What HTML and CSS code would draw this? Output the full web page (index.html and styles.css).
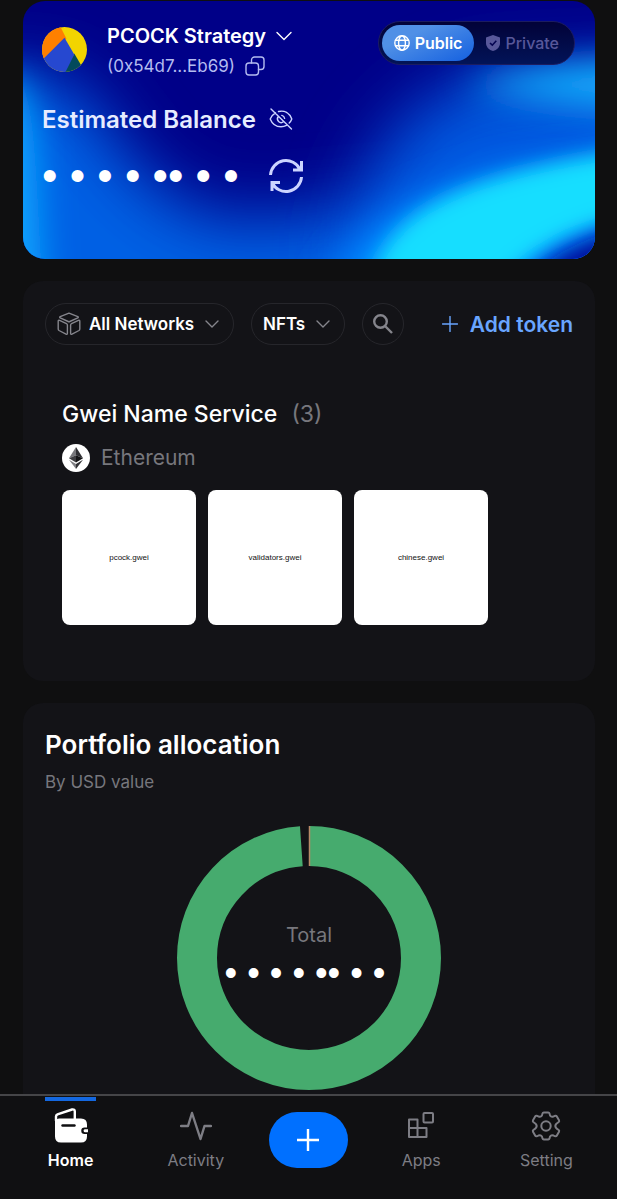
FILE: index.html
```html
<!DOCTYPE html>
<html lang="en">
<head>
    <meta charset="UTF-8">
    <meta name="viewport" content="width=device-width, initial-scale=1.0">
    <title>Wallet</title>
    <link rel="stylesheet" href="styles.css">
</head>
<body>

    <main>
        <!-- Balance card -->
        <section class="balance-card">
            <svg class="balance-bg" viewBox="0 0 573 258" preserveAspectRatio="none" aria-hidden="true">
                <defs>
                    <filter id="blurS" filterUnits="userSpaceOnUse" x="-150" y="-150" width="900" height="560"><feGaussianBlur stdDeviation="10"/></filter>
                    <filter id="blurM" filterUnits="userSpaceOnUse" x="-150" y="-150" width="900" height="560"><feGaussianBlur stdDeviation="18"/></filter>
                    <filter id="blurL" filterUnits="userSpaceOnUse" x="-150" y="-150" width="900" height="560"><feGaussianBlur stdDeviation="34"/></filter>
                </defs>
                <rect width="573" height="258" fill="#000088"/>
                <path d="M-80 76 L40 76 C90 110 100 195 210 220 L440 200 L440 360 L-80 360Z" fill="#0060e4" filter="url(#blurL)"/>
                <path d="M340 340 C310 200 350 120 450 76 L680 66 L680 340Z" fill="#0058e0" filter="url(#blurL)"/>
                <path d="M-80 76 L-4 76 C16 110 12 200 24 340 L-80 340Z" fill="#0ca8ff" filter="url(#blurM)"/>
                <path d="M440 84 C500 66 560 60 680 56 L680 108 C580 112 500 100 440 84Z" fill="#18b0ff" filter="url(#blurM)"/>
                <path d="M290 320 C330 210 390 170 680 146 L680 320Z" fill="#0088ff" filter="url(#blurM)"/>
                <path d="M340 320 C350 220 400 172 680 140 L680 202 C570 216 500 240 450 320Z" fill="#12deff" filter="url(#blurS)"/>
                <path d="M490 320 C505 258 545 236 680 208 L680 320Z" fill="#00109c" filter="url(#blurS)"/>
            </svg>

            <div class="account-row">
                <svg class="avatar" viewBox="0 0 46 46" aria-hidden="true">
                    <clipPath id="avatarClip"><circle cx="23" cy="23" r="23"/></clipPath>
                    <g clip-path="url(#avatarClip)">
                        <rect width="46" height="46" fill="#f2d400"/>
                        <path d="M0 0H19L25 12L0 35Z" fill="#ff8000"/>
                        <path d="M33 27L40 39L32 46H22Z" fill="#024a5c"/>
                        <path d="M0 34L23 11L33 28L24 46H0Z" fill="#2648d0"/>
                    </g>
                </svg>
                <div class="account">
                    <button type="button" class="account-name">PCOCK Strategy
                        <svg width="16" height="10" viewBox="0 0 16 10" class="line"><path d="M1 1.5L8 8.500L15 1.500"/></svg>
                    </button>
                    <button type="button" class="account-address" aria-label="Copy address (0x54d7...Eb69)">(0x54d7...Eb69)
                        <svg width="20" height="20" viewBox="0 0 20 20" class="line"><rect x="1" y="7" width="12.500" height="12" rx="3"/><path d="M6.500 7V4a3 3 0 0 1 3-3H16a3 3 0 0 1 3 3v6.500a3 3 0 0 1-3 3h-2.500"/></svg>
                    </button>
                </div>
                <div class="mode-switch">
                    <button type="button" class="mode active" aria-pressed="true">
                        <svg width="16" height="16" viewBox="0 0 16 16" class="line"><circle cx="8" cy="8" r="7.200"/><ellipse cx="8" cy="8" rx="3.400" ry="7.200"/><path d="M1.500 5.200H14.500M1.500 10.800H14.500"/></svg>
                        Public
                    </button>
                    <button type="button" class="mode" aria-pressed="false">
                        <svg width="14" height="16" viewBox="0 0 14 16"><path d="M7 0L14 2.500V8C14 12 11 15 7 16C3 15 0 12 0 8V2.500Z" fill="currentColor"/><path d="M4 8L6.300 10.200L10.300 5.800" fill="none" stroke="#040450" stroke-width="1.600"/></svg>
                        Private
                    </button>
                </div>
            </div>

            <div class="balance-label">
                <h2>Estimated Balance</h2>
                <button type="button" class="icon-button" aria-label="Show balance">
                    <svg width="24" height="22" viewBox="0 0 24 22" class="line"><path d="M6.500 4.800C4 6.200 2.200 8.500 1.200 11C3.200 16 7.200 18.800 12 18.800C14 18.800 15.900 18.300 17.500 17.400M9.500 3.500C15.500 2 20.500 5 22.800 11C22.200 12.600 21.300 14 20.200 15.100M9.300 8.500A3.700 3.700 0 0 0 14.500 13.700M12.800 7.400A3.700 3.700 0 0 1 15.600 10.300M2 1L22.500 21"/></svg>
                </button>
            </div>

            <div class="balance-value">
                <span class="masked">• • • • •• • •</span>
                <button type="button" class="icon-button" aria-label="Refresh">
                    <svg width="34" height="34" viewBox="0 0 34 34" class="line refresh"><path d="M1.500 16A15.500 15.500 0 0 1 31 10.500M32.500 2V11H24M32.500 18A15.500 15.500 0 0 1 3 23.500M3 32V23.500H11"/></svg>
                </button>
            </div>
        </section>

        <!-- Tokens / NFTs -->
        <section class="card">
            <div class="filters">
                <label class="pill">
                    <svg width="24" height="24" viewBox="0 0 24 24" class="line"><path d="M12 1.200L20.800 4.600Q21.800 5.200 20.800 5.900L12.800 9.500Q12 9.900 11.200 9.500L3.200 5.900Q2.200 5.200 3.200 4.600ZM2.600 8.400L9.500 11.600Q10.400 12.100 10.400 13.100V21.300Q10.400 22.800 9 22.200L2 18.500Q1.200 18 1.200 17V9.300Q1.200 7.900 2.600 8.400ZM21.400 8.400L14.500 11.600Q13.600 12.100 13.600 13.100V21.300Q13.600 22.800 15 22.200L22 18.500Q22.800 18 22.800 17V9.300Q22.800 7.900 21.400 8.400Z"/></svg>
                    <select aria-label="Network"><option>All Networks</option></select>
                    <svg width="14" height="8" viewBox="0 0 14 8" class="line"><path d="M1 1L7 7L13 1"/></svg>
                </label>
                <label class="pill">
                    <select aria-label="Asset type"><option>NFTs</option></select>
                    <svg width="14" height="8" viewBox="0 0 14 8" class="line"><path d="M1 1L7 7L13 1"/></svg>
                </label>
                <button type="button" class="search" aria-label="Search">
                    <svg width="20" height="20" viewBox="0 0 20 20"><circle cx="7.500" cy="7.500" r="6.300"/><path d="M12 12L19 19"/></svg>
                </button>
                <button type="button" class="add-token">
                    <svg width="16" height="16" viewBox="0 0 16 16" class="line"><path d="M8 0.500V15.500M0.500 8H15.500"/></svg>
                    Add token
                </button>
            </div>

            <div class="collection">
                <h3>Gwei Name Service <span>(3)</span></h3>
                <p class="chain">
                    <svg width="28" height="28" viewBox="0 0 28 28" aria-hidden="true">
                        <circle cx="14" cy="14" r="14" fill="#fff"/>
                        <path d="M14 3L7 14.300L14 11.200Z" fill="#77777b"/>
                        <path d="M14 3L21 14.300L14 11.200Z" fill="#303034"/>
                        <path d="M14 11.200L7 14.300L14 18.500Z" fill="#3c3c40"/>
                        <path d="M14 11.200L21 14.300L14 18.500Z" fill="#141416"/>
                        <path d="M7 15.800L14 20V25Z" fill="#808084"/>
                        <path d="M21 15.800L14 20V25Z" fill="#303034"/>
                    </svg>
                    Ethereum
                </p>
                <div class="nfts">
                    <a href="#" class="nft">pcock.gwei</a>
                    <a href="#" class="nft">validators.gwei</a>
                    <a href="#" class="nft">chinese.gwei</a>
                </div>
            </div>
        </section>

        <!-- Portfolio chart -->
        <section class="card portfolio">
            <h2>Portfolio allocation</h2>
            <p class="subtitle">By USD value</p>
            <div class="chart">
                <svg viewBox="0 0 264 264" aria-hidden="true">
                    <circle cx="132" cy="132" r="112" fill="none" stroke="#46ab6e" stroke-width="40" pathLength="360" stroke-dasharray="356 4" transform="rotate(-90 132 132)"/>
                    <path d="M132.500 0V40" stroke="#b98a68" stroke-width="1.500"/>
                </svg>
                <div class="chart-total">
                    <span>Total</span>
                    <span class="masked small">• • • • •• • •</span>
                </div>
            </div>
        </section>
    </main>

    <!-- Bottom navigation -->
    <nav>
        <a href="#" class="active">
            <svg width="34" height="36" viewBox="0 0 34 36"><path d="M2 13V8.500Q2 7 3.500 6.300L18 1.500Q20.800 1 20.800 3.500V11" fill="none" stroke="currentColor" stroke-width="2.400"/><path d="M1 13Q2 10.500 5 10.500H27Q33 10.500 33 16.500V19.500H30.500A3.200 3.200 0 0 0 30.500 26H33V28.500Q33 34.500 27 34.500H7Q1 34.500 1 28.500Z" fill="currentColor"/><path d="M34 21.300H31.200Q29.600 21.300 29.600 22.700Q29.600 24.200 31.200 24.200H34Z" fill="currentColor"/><path d="M8.500 17.500H20.500" stroke="#101012" stroke-width="2.400" stroke-linecap="round"/></svg>
            Home
        </a>
        <a href="#">
            <svg width="32" height="30" viewBox="0 0 32 30" class="line bold"><path d="M1 15H8L12 2L20.500 28L24.500 15H31"/></svg>
            Activity
        </a>
        <button type="button" class="add" aria-label="Add">
            <svg width="22" height="22" viewBox="0 0 22 22" class="line bold"><path d="M11 0V22M0 11H22"/></svg>
        </button>
        <a href="#">
            <svg width="28" height="30" viewBox="0 0 28 30" class="line medium"><path d="M2 8.500H10.500V26H2ZM2 17H19.500V26H10.500"/><rect x="16.500" y="2" width="9.500" height="9.500" rx="1"/></svg>
            Apps
        </a>
        <a href="#">
            <svg width="30" height="30" viewBox="0 0 30 30" class="line medium"><path d="M11.500 2.500Q11.800 1.500 12.800 1.500H17.200Q18.200 1.500 18.500 2.500Q19 6.500 22.500 5.500Q25 4 25.700 5.200L28 9.200Q28.500 10.300 27.700 11Q24.300 13 24.300 15Q24.300 17 27.700 19Q28.500 19.700 28 20.800L25.700 24.800Q25 26 22.500 24.500Q19 23.500 18.500 27.500Q18.200 28.500 17.200 28.500H12.800Q11.800 28.500 11.500 27.500Q11 23.500 7.500 24.500Q5 26 4.300 24.800L2 20.800Q1.500 19.700 2.300 19Q5.700 17 5.700 15Q5.700 13 2.300 11Q1.500 10.300 2 9.200L4.300 5.200Q5 4 7.500 5.500Q11 6.500 11.500 2.500Z"/><circle cx="15" cy="15" r="4.700"/></svg>
            Setting
        </a>
    </nav>

</body>
</html>
```

FILE: styles.css
```css
/* General Styles */
* {
    box-sizing: border-box;
}

body {
    display: flex;
    flex-direction: column;
    min-height: 100vh;
    margin: 0;
    font-family: Inter, sans-serif;
    background-color: #0f0f10;
    color: #fff;
}

main {
    display: flex;
    flex: 1;
    flex-direction: column;
    gap: 22px;
    padding: 1px 22px 0 23px;
}

h2,
h3,
p {
    margin: 0;
}

button,
select {
    padding: 0;
    border: none;
    background: none;
    color: inherit;
    font: inherit;
    cursor: pointer;
}

a {
    color: inherit;
    text-decoration: none;
}

svg {
    flex: none;
}

.line {
    fill: none;
    stroke: currentColor;
    stroke-width: 1.4;
    stroke-linecap: round;
    stroke-linejoin: round;
}

.medium {
    stroke-width: 2;
}

.bold {
    stroke-width: 2.4;
}

/* Balance card */
.balance-card {
    position: relative;
    display: flex;
    flex-direction: column;
    height: 258px;
    padding: 20px 20px 20px 19px;
    overflow: hidden;
    border-radius: 22px;
    isolation: isolate;
}

.balance-bg {
    position: absolute;
    inset: 0;
    z-index: -1;
    width: 100%;
    height: 100%;
}

.account-row {
    display: flex;
    align-items: flex-start;
}

.avatar {
    width: 45px;
    margin-top: 6px;
}

.account {
    display: flex;
    flex: 1;
    flex-direction: column;
    align-items: flex-start;
    margin-left: 20px;
}

.account-name,
.account-address {
    display: flex;
    align-items: center;
    gap: 10px;
    line-height: 30px;
    white-space: nowrap;
}

.account-name {
    font-size: 20px;
    font-weight: 600;
}

.account-address {
    color: #b4bcf0;
    font-size: 17px;
}

.mode-switch {
    display: flex;
    height: 44px;
    padding: 3px;
    border: 1px solid #1c1c60;
    border-radius: 22px;
    background: linear-gradient(#020238, #021458);
}

.mode {
    display: flex;
    align-items: center;
    gap: 5px;
    padding: 0 12px;
    border-radius: 18px;
    color: #58589a;
    font-size: 16px;
    font-weight: 500;
}

.mode.active {
    background: linear-gradient(155deg, #5090e6 30%, #1460e0);
    color: #fff;
    font-weight: 600;
}

.balance-label,
.balance-value {
    display: flex;
    align-items: center;
}

.balance-label {
    gap: 13px;
    height: 30px;
    margin-top: 23px;
    color: #e6ecff;
}

.balance-label h2 {
    font-size: 24px;
    font-weight: 600;
}

.icon-button {
    display: flex;
    color: #ccd4ff;
}

.balance-value {
    gap: 30px;
    height: 40px;
    margin-top: 22px;
}

.refresh {
    stroke-width: 3;
    stroke-linecap: butt;
    stroke-linejoin: miter;
}

.masked {
    font-family: "Liberation Sans", Arial, sans-serif;
    font-size: 44px;
    line-height: 40px;
    white-space: nowrap;
}

.masked.small {
    font-size: 36px;
}

/* Cards */
.card {
    padding: 22px;
    border-radius: 20px;
    background-color: #131317;
}

.filters {
    display: flex;
    align-items: center;
    gap: 17px;
}

.pill {
    display: flex;
    align-items: center;
    gap: 8px;
    height: 42px;
    padding: 0 14px 0 11px;
    border: 1px solid #26262b;
    border-radius: 21px;
    color: #85858c;
}

.pill select {
    appearance: none;
    margin-right: 2px;
    color: #fff;
    font-size: 17px;
    font-weight: 600;
}

.search {
    display: grid;
    place-items: center;
    width: 42px;
    height: 42px;
    border: 1px solid #26262b;
    border-radius: 50%;
}

.search svg {
    fill: none;
    stroke: #85858c;
    stroke-width: 2.4;
}

.add-token {
    display: flex;
    align-items: center;
    gap: 12px;
    margin-left: auto;
    color: #69a5ff;
    font-size: 21px;
    font-weight: 600;
    white-space: nowrap;
}

.collection {
    padding: 52px 17px 34px;
}

.collection h3 {
    font-size: 23px;
    font-weight: 500;
    line-height: 34px;
}

.collection h3 span {
    margin-left: 8px;
    color: #77777d;
    font-weight: 400;
}

.chain {
    display: flex;
    align-items: center;
    gap: 11px;
    margin-top: 13px;
    color: #77777d;
    font-size: 21px;
    line-height: 28px;
}

.nfts {
    display: grid;
    grid-template-columns: repeat(auto-fill, 134px);
    gap: 12px;
    margin-top: 18px;
}

.nft {
    display: grid;
    place-items: center;
    height: 135px;
    border-radius: 8px;
    background-color: #fff;
    color: #111;
    font-family: "Liberation Sans", Arial, sans-serif;
    font-size: 8px;
}

/* Portfolio */
.portfolio {
    flex: 1;
    padding-bottom: 4px;
    border-radius: 20px 20px 0 0;
}

.portfolio h2 {
    font-size: 26px;
    font-weight: 600;
    line-height: 40px;
}

.subtitle {
    margin-top: 3px;
    color: #77777d;
    font-size: 17px;
    line-height: 28px;
}

.chart {
    display: grid;
    justify-items: center;
    align-items: center;
    margin-top: 30px;
}

.chart svg,
.chart-total {
    grid-area: 1 / 1;
}

.chart svg {
    width: 264px;
}

.chart-total {
    display: flex;
    flex-direction: column;
    gap: 4px;
    align-items: center;
    padding-bottom: 3px;
    color: #77777d;
    font-size: 20px;
    line-height: 28px;
}

.chart-total .masked {
    padding-right: 8px;
    color: #fff;
}

/* Bottom navigation */
nav {
    position: sticky;
    bottom: 0;
    display: grid;
    grid-template-columns: 5fr 5fr 4fr 5fr 5fr;
    height: 105px;
    padding: 0 8px;
    border-top: 2px solid #454548;
    background-color: #101012;
}

nav a {
    display: grid;
    grid-template-rows: 36px 32px;
    align-content: start;
    place-items: center;
    padding-top: 12px;
    color: #7d7d84;
    font-size: 16px;
}

nav a.active {
    background: linear-gradient(#1468e0, #1468e0) center 1px / 51px 4px no-repeat;
    color: #fff;
    font-weight: 600;
}

.add {
    display: grid;
    place-items: center;
    justify-self: center;
    width: 79px;
    height: 56px;
    margin-top: 16px;
    border-radius: 28px;
    background-color: #0070ff;
}
```
